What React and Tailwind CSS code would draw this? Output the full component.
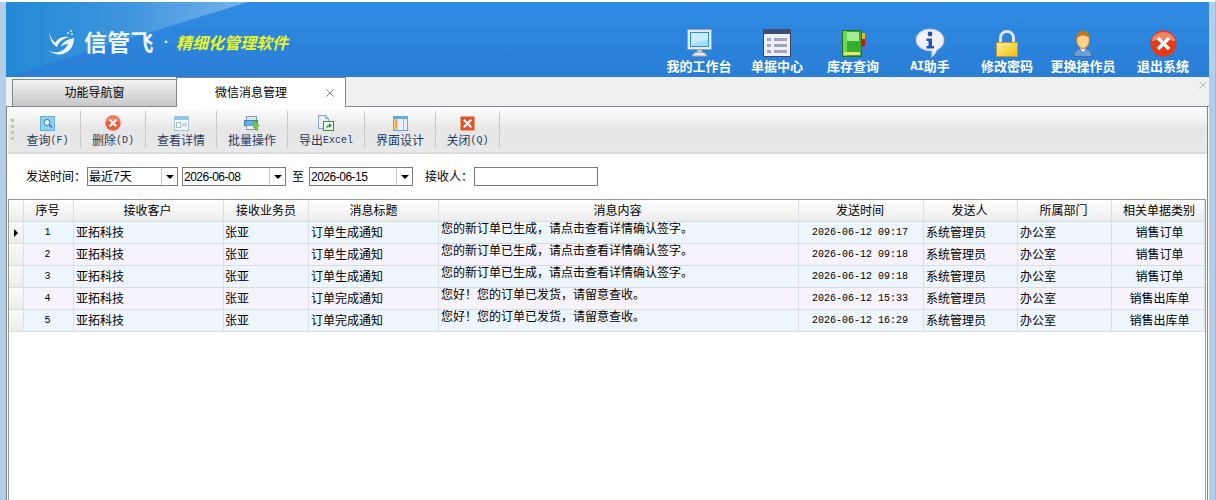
import React from "react";
import { X } from "lucide-react";

const cjk = "font-['Liberation_Sans','Noto_Sans_CJK_SC',sans-serif]";
const mono = "font-['Liberation_Mono','Noto_Sans_CJK_SC',monospace]";

const MonitorIcon = () => (
  <svg width="27" height="28" viewBox="0 0 27 28">
    <rect x="1.500" y="0.500" width="24" height="20" rx="1" fill="#e6eaee" stroke="#9aa2aa" />
    <rect x="4" y="3" width="19" height="15" fill="#2f8fd0" />
    <rect x="5" y="4" width="17" height="13" fill="#9fdcf8" />
    <path d="M5 4h17v7c-6 0-12 2-17 6z" fill="#c8eefc" />
    <path d="M11 21h5v2h-5z" fill="#c4c8cc" />
    <path d="M6 27c1-3 4-4 7.500-4s6.500 1 7.500 4z" fill="#e8eaec" stroke="#a4a8ac" />
  </svg>
);

const ListIcon = () => (
  <svg width="28" height="28" viewBox="0 0 28 28">
    <rect x="0.500" y="0.500" width="27" height="27" fill="#eef0f6" stroke="#3a4468" />
    <rect x="0" y="0" width="28" height="5" fill="#414c74" />
    <path d="M4 9h4v3H4zM4 15h4v3H4zM4 21h4v3H4z" fill="#a4a6b8" />
    <path d="M11 9h13v3H11zM11 15h13v3H11zM11 21h13v3H11z" fill="#a4a6b8" />
  </svg>
);

const BookIcon = () => (
  <svg width="23" height="27" viewBox="0 0 23 27">
    <rect x="19" y="3" width="4" height="6" fill="#e8b830" />
    <rect x="19" y="9" width="4" height="7" fill="#c01818" />
    <rect x="19" y="16" width="4" height="7" fill="#4a74cc" />
    <rect x="0.500" y="0.500" width="19" height="26" fill="#35ad2e" stroke="#1c7a1c" />
    <rect x="1" y="1" width="4" height="25" fill="#6ad858" />
    <rect x="5" y="2" width="12" height="9" fill="#a6ea94" />
    <rect x="2" y="22" width="16" height="3" fill="#f2e070" />
  </svg>
);

const InfoIcon = () => (
  <svg width="30" height="30" viewBox="0 0 30 30">
    <path d="M15 1c8 0 14 5 14 11 0 5-3 8-7 10-1 3-3 6-6 7 1-2 1-4 1-6C7 23 1 18 1 12 1 6 7 1 15 1z" fill="#f0f0fc" stroke="#b6bade" />
    <circle cx="15" cy="6" r="2.400" fill="#1a55b8" />
    <path d="M11.500 10.500h5.500V18h2v2.500h-7.500V18h2v-5h-2z" fill="#1a55b8" />
  </svg>
);

const LockIcon = () => (
  <svg width="22" height="27" viewBox="0 0 22 27">
    <defs>
      <linearGradient id="lockBody" x1="0" y1="0" x2="1" y2="1">
        <stop offset="0" stopColor="#fff0a0" />
        <stop offset="1" stopColor="#f4bc00" />
      </linearGradient>
    </defs>
    <path d="M4.500 13V8c0-4 3-6.500 6.500-6.500s6.500 2.500 6.500 6.500v5" fill="none" stroke="#e2e6f2" strokeWidth="3" />
    <rect x="0.500" y="12.500" width="21" height="14" fill="url(#lockBody)" stroke="#c09640" />
  </svg>
);

const PersonIcon = () => (
  <svg width="20" height="27" viewBox="0 0 20 27">
    <path d="M1 26.500c0-5 3-8 9-8s9 3 9 8z" fill="#6f9ed6" stroke="#3d6aa0" />
    <path d="M7 18l3 4 3-4z" fill="#f2f4f6" />
    <ellipse cx="10" cy="10" rx="6.500" ry="8.500" fill="#fdd08c" stroke="#b8781e" />
    <path d="M3.500 9.500C2.500 4 6 1 10 1s7.500 3 6.500 8.500c-1-3-3.500-4-6.500-4s-5.500 1-6.500 4z" fill="#c07a1c" />
  </svg>
);

const CloseRedIcon = ({ size = 27, muted = false }) => (
  <svg width={size} height={size} viewBox="0 0 28 28">
    <circle cx="14" cy="14" r="13.500" fill={muted ? "#e8603f" : "#e63a1a"} />
    <path d="M2 12a12 10 0 0 1 24 0c-7-3-17-3-24 0z" fill="#f28468" />
    <path d="M9.500 7L14 11.500 18.500 7 21 9.500 16.500 14l4.500 4.500-2.500 2.500L14 16.500 9.500 21 7 18.500 11.500 14 7 9.500z" fill="#fff" />
  </svg>
);

const LogoMark = () => (
  <svg width="27" height="27" viewBox="0 0 27 27">
    <path d="M1 3c1 7 3 12 8 15 2-6 7-9 12-10-6-1-11 1-14 6C4 11 2 7 1 3z" fill="#fff" />
    <path d="M26 9c0 9-5 14-11 16-5 1-10 0-14-3 5 2 10 2 14-1 3-2 4-4 5-6-3 0-5 1-7 3 1-5 7-8 13-9z" fill="#eef6fc" />
    <circle cx="20" cy="4" r="1" fill="#d8eeff" />
    <circle cx="23" cy="2" r="1" fill="#d8eeff" />
    <circle cx="24" cy="5" r="1" fill="#d8eeff" />
  </svg>
);

const navItems = [
  { cn: "我的工作台", icon: <MonitorIcon />, w: "w-[78px]" },
  { cn: "单据中心", icon: <ListIcon />, w: "w-[78px]" },
  { cn: "库存查询", icon: <BookIcon />, w: "w-[74px]" },
  { latin: "AI", cn: "助手", icon: <InfoIcon />, w: "w-[80px]" },
  { cn: "修改密码", icon: <LockIcon />, w: "w-[74px]" },
  { cn: "更换操作员", icon: <PersonIcon />, w: "w-[78px]" },
  { cn: "退出系统", icon: <CloseRedIcon />, w: "w-[82px]" },
];

const SearchTool = () => (
  <svg width="15" height="15" viewBox="0 0 15 15">
    <rect x="0.500" y="0.500" width="14" height="14" fill="#8ed0f6" stroke="#62b0e0" />
    <circle cx="7" cy="6.500" r="3" fill="#eaf7ff" stroke="#2f74b4" />
    <path d="M9.500 9l2.500 2.500" stroke="#2f74b4" strokeWidth="1.500" />
  </svg>
);

const DetailTool = () => (
  <svg width="15" height="15" viewBox="0 0 15 15">
    <rect x="0.500" y="0.500" width="14" height="14" fill="#f4f6f9" stroke="#a8c4d8" />
    <rect x="1" y="1" width="13" height="3" fill="#8cc8e8" />
    <rect x="2.500" y="6.500" width="4" height="5" fill="#fff" stroke="#a8c0d4" />
    <path d="M8 8h5M8 10h5" stroke="#a8b8c8" />
  </svg>
);

const BatchTool = () => (
  <svg width="16" height="15" viewBox="0 0 16 15">
    <rect x="2.500" y="0.500" width="10" height="4" fill="#dfe6ec" stroke="#8a9aa8" />
    <rect x="0.500" y="4.500" width="13" height="5" fill="#58b4ea" stroke="#3a80b0" />
    <rect x="2.500" y="9.500" width="9" height="4" fill="#eef2f5" stroke="#8a9aa8" />
    <path d="M10 4l5.500 6-2.500.5 1 3.500-2 .5-1-3.500-1.500 1.500z" fill="#74cc44" stroke="#4a9a28" strokeWidth="0.500" />
  </svg>
);

const ExportTool = () => (
  <svg width="16" height="16" viewBox="0 0 16 16">
    <path d="M0.500 0.500h7l3 3v10h-10z" fill="#e8f0fa" stroke="#8aa4c8" />
    <path d="M7.500 0.500v3h3z" fill="#c4d4ea" stroke="#8aa4c8" />
    <rect x="5.500" y="6.500" width="10" height="9" fill="#f6fbf2" stroke="#3a8a3a" />
    <path d="M8 14c0-3 1-4 3-4V8l3 2.500-3 2.500v-1.500c-1 0-2 1-3 2.500z" fill="#2a9a3a" />
  </svg>
);

const DesignTool = () => (
  <svg width="15" height="15" viewBox="0 0 15 15">
    <rect x="0.500" y="0.500" width="14" height="14" fill="#e8f0fc" stroke="#64a8dc" />
    <rect x="1" y="1" width="13" height="2" fill="#58b0e0" />
    <rect x="1" y="3" width="4" height="11" fill="#f4cc70" />
    <path d="M2 5h2M2 7h2M2 9h2M2 11h2" stroke="#d88850" />
    <rect x="10" y="3" width="1" height="11" fill="#9cc0e4" />
  </svg>
);

const CloseTool = () => (
  <svg width="15" height="15" viewBox="0 0 15 15">
    <rect x="0.500" y="0.500" width="14" height="14" rx="1" fill="#e8502c" stroke="#dca878" />
    <path d="M4.500 3L7.500 6l3-3L12 4.500l-3 3 3 3-1.500 1.500-3-3-3 3L3 10.500l3-3-3-3z" fill="#fff" />
  </svg>
);

const toolItems = [
  { cn: "查询", latin: "(F)", icon: <SearchTool />, w: "w-[66px]" },
  { cn: "删除", latin: "(D)", icon: <CloseRedIcon size={16} muted />, w: "w-[65px]" },
  { cn: "查看详情", icon: <DetailTool />, w: "w-[71px]" },
  { cn: "批量操作", icon: <BatchTool />, w: "w-[71px]" },
  { cn: "导出", latin: "Excel", icon: <ExportTool />, w: "w-[77px]" },
  { cn: "界面设计", icon: <DesignTool />, w: "w-[71px]" },
  { cn: "关闭", latin: "(Q)", icon: <CloseTool />, w: "w-[64px]" },
];

const columns = [
  { label: "序号", w: "w-[50px] pr-[2px]" },
  { label: "接收客户", w: "w-[150px] pr-[2px]" },
  { label: "接收业务员", w: "w-[85px]" },
  { label: "消息标题", w: "w-[130px]" },
  { label: "消息内容", w: "w-[360px] pr-[2px]" },
  { label: "发送时间", w: "w-[125px] pr-[2px]" },
  { label: "发送人", w: "w-[94px] pr-[2px]" },
  { label: "所属部门", w: "w-[94px] pr-[2px]" },
  { label: "相关单据类别", w: "w-[93px] pl-[2px]" },
];

const msgNew = "您的新订单已生成，请点击查看详情确认签字。";
const msgDone = "您好！您的订单已发货，请留意查收。";

const rows = [
  { no: 1, title: "订单生成通知", msg: msgNew, time: "2026-06-12 09:17", type: "销售订单" },
  { no: 2, title: "订单生成通知", msg: msgNew, time: "2026-06-12 09:18", type: "销售订单" },
  { no: 3, title: "订单生成通知", msg: msgNew, time: "2026-06-12 09:18", type: "销售订单" },
  { no: 4, title: "订单完成通知", msg: msgDone, time: "2026-06-12 15:33", type: "销售出库单" },
  { no: 5, title: "订单完成通知", msg: msgDone, time: "2026-06-12 16:29", type: "销售出库单" },
];

const ComboBox = ({ value, w, date }) => (
  <div className={`flex h-[19px] ${w} shrink-0 border border-[#7a7a7a] bg-white`}>
    <span className={`flex-1 pl-[1px] text-[12px] leading-[18px] text-black ${date ? "tracking-[-0.5px]" : ""}`}>{value}</span>
    <span className="flex w-[16px] items-center justify-center border-l border-[#c8c8c8]">
      <span className="h-0 w-0 border-x-[4px] border-t-[4px] border-x-transparent border-t-black" />
    </span>
  </div>
);

const cellClass = "flex h-full shrink-0 items-center border-r border-[#dcdfe3]";

const App = () => {
  return (
    <div className={`h-[500px] w-[1216px] overflow-hidden border-t-2 border-r border-t-white border-r-[#7fc4ec] bg-[#b4cde8] text-[12px] text-black ${cjk}`}>
      <div className="ml-[6px] mr-[6px] flex h-[498px] flex-col">
        <div className="relative flex h-[75px] shrink-0 items-end justify-between overflow-hidden bg-gradient-to-b from-[#2f8be2] to-[#2a7ed6]">
          <div className="absolute top-0 left-0 h-[75px] w-[242px] bg-gradient-to-r from-[#2189d6] via-[#3d95de] to-[#74b2ea] [clip-path:polygon(0_0,100%_0,0_100%)]" />
          <div className="relative mb-[21px] ml-[42px] flex items-center">
            <LogoMark />
            <span className="ml-[9px] text-[23px] leading-[26px] font-bold tracking-[0.3px] text-[#eaf5fd]">信管飞</span>
            <span className="ml-[10px] w-[12px] text-[14px] font-bold text-white">·</span>
            <span className="mt-[2px] text-[16px] leading-[20px] font-bold text-[#e8f52a] italic">精细化管理软件</span>
          </div>
          <div className="relative mr-[5px] flex">
            {navItems.map((item) => (
              <div key={item.cn} className={`flex ${item.w} flex-col items-center`}>
                <div className="flex h-[30px] items-center justify-center">{item.icon}</div>
                <span className="mt-[2px] mb-[3px] flex h-[14px] items-center text-[13px] leading-[14px] font-bold whitespace-nowrap text-white">
                  {item.latin && <span className={`${mono} text-[12px] tracking-[-0.5px]`}>{item.latin}</span>}
                  {item.cn}
                </span>
              </div>
            ))}
          </div>
        </div>

        <div className="flex flex-1 flex-col overflow-hidden bg-[#f0f0f0]">
          <div className="relative flex h-[30px] shrink-0 items-end border-b border-[#84848c] pl-[6px]">
            <div className="flex h-[27px] w-[165px] items-center justify-center border border-b-0 border-[#84848c] bg-gradient-to-b from-[#f2f2f2] to-[#c8c8c8]">
              功能导航窗
            </div>
            <div className="relative -mb-[1px] -ml-[1px] flex h-[30px] w-[170px] items-center justify-center border border-b-0 border-[#84848c] bg-white pr-[20px]">
              微信消息管理
              <X className="absolute top-[8px] right-[8px] text-[#555]" size={14} strokeWidth={1.200} />
            </div>
            <X className="absolute top-[2px] right-0 text-[#999]" size={12} strokeWidth={1.200} />
          </div>

          <div className="flex flex-1 flex-col overflow-hidden border-r border-r-white">
            <div className="flex flex-1 flex-col overflow-hidden border-x border-[#84848c] bg-white pl-[1px]">
              <div className="flex h-[47px] shrink-0 items-center border-b-2 border-[#dcdcdc] bg-gradient-to-b from-[#ffffff] via-[#e6e6e6] to-[#e9e9e9] pl-[3px]">
                <div className="h-[21px] w-[4px] border-l-[3px] border-dotted border-[#c0c0c0]" />
                {toolItems.map((tool) => (
                  <div key={tool.cn} className={`flex h-[37px] ${tool.w} flex-col items-center justify-between border-r border-[#c8c8c8] pt-[4px] text-[#1e3a5f]`}>
                    <span className="flex h-[16px] items-center">{tool.icon}</span>
                    <span className="flex h-[14px] items-center text-[12px] leading-[14px] whitespace-nowrap">
                      {tool.cn}
                      {tool.latin && <span className={`${mono} text-[10px]`}>{tool.latin}</span>}
                    </span>
                  </div>
                ))}
              </div>

              <div className="flex h-[45px] shrink-0 items-center pl-[18px]">
                <span className="mr-[1px] w-[60px] shrink-0">发送时间：</span>
                <ComboBox value="最近7天" w="w-[91px]" />
                <span className="w-[4px] shrink-0" />
                <ComboBox value="2026-06-08" w="w-[104px]" date />
                <span className="mr-[5px] ml-[6px] shrink-0">至</span>
                <ComboBox value="2026-06-15" w="w-[104px]" date />
                <span className="mr-[1px] ml-[12px] w-[48px] shrink-0">接收人：</span>
                <div className="h-[19px] w-[124px] shrink-0 border border-[#7a7a7a] bg-white" />
              </div>

              <div className="mr-[1px] flex flex-1 flex-col border border-b-0 border-[#9a9a9a]">
                <div className="flex h-[22px] shrink-0 border-b border-[#d8dce0] bg-gradient-to-b from-[#ffffff] to-[#ececec]">
                  <div className="w-[15px] shrink-0 border-r border-[#dcdfe3]" />
                  {columns.map((c) => (
                    <div key={c.label} className={`${cellClass} ${c.w} justify-center`}>{c.label}</div>
                  ))}
                </div>
                {rows.map((r) => (
                  <div key={r.no} className={`flex h-[22px] shrink-0 border-b border-[#d8dce0] ${r.no % 2 ? "bg-[#eef6fd]" : "bg-[#f6f3fc]"}`}>
                    <div className="flex w-[15px] shrink-0 items-center justify-center border-r border-[#dcdfe3] bg-gradient-to-b from-[#fafafa] to-[#ececec]">
                      {r.no === 1 && <span className="h-0 w-0 border-y-[4px] border-l-[4px] border-y-transparent border-l-black" />}
                    </div>
                    <div className={`${cellClass} w-[50px] justify-center pr-[2px] ${mono} text-[10px]`}>{r.no}</div>
                    <div className={`${cellClass} w-[150px] pl-[2px]`}>亚拓科技</div>
                    <div className={`${cellClass} w-[85px] pl-[1px]`}>张亚</div>
                    <div className={`${cellClass} w-[130px] pl-[2px]`}>{r.title}</div>
                    <div className={`${cellClass} w-[360px] items-start pl-[2px]`}><span className="leading-[15px]">{r.msg}</span></div>
                    <div className={`${cellClass} w-[125px] justify-center pr-[2px] ${mono} text-[10px] font-normal`}>{r.time}</div>
                    <div className={`${cellClass} w-[94px] pl-[2px]`}>系统管理员</div>
                    <div className={`${cellClass} w-[94px] pl-[2px]`}>办公室</div>
                    <div className={`${cellClass} w-[93px] justify-center pl-[3px]`}>{r.type}</div>
                  </div>
                ))}
              </div>
            </div>
          </div>
        </div>
      </div>
    </div>
  );
};

export default App;
